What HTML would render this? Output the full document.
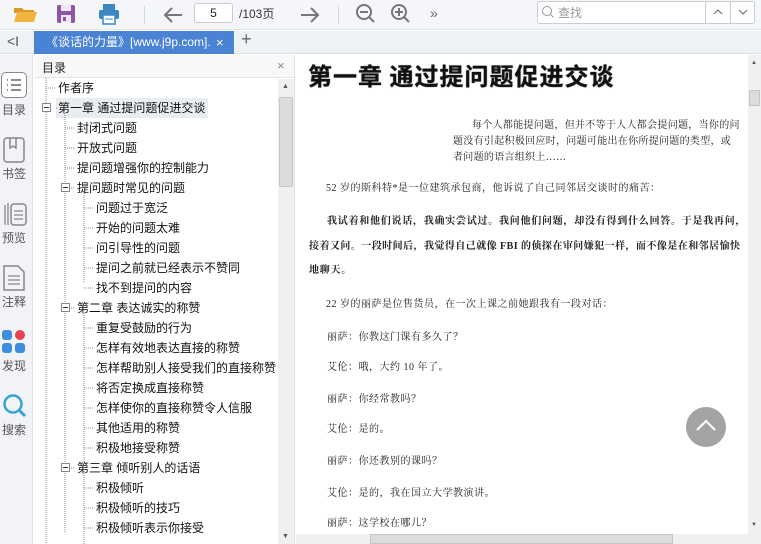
<!DOCTYPE html>
<html><head><meta charset="utf-8"><style>
*{margin:0;padding:0;box-sizing:border-box}
body{width:761px;height:544px;overflow:hidden;background:#fff;font-family:"Liberation Sans","Noto Sans CJK SC",sans-serif;position:relative;font-size:12px;color:#222}
.a{position:absolute}
.toc div{position:absolute;height:20px;line-height:20px;white-space:nowrap;font-size:12px;color:#111}
.c{font-family:"Liberation Serif","Noto Serif CJK SC",serif;font-size:10px;letter-spacing:.5px;color:#222;position:absolute;white-space:nowrap}
.side{position:absolute;left:0;width:28px;text-align:center;font-size:12px;color:#555}
</style></head><body>
<!-- toolbar -->
<div class="a" style="left:0;top:0;width:761px;height:30px;background:#f4f6f9;border-bottom:1px solid #e2e6eb"></div>
<svg class="a" style="left:12px;top:3px" width="26" height="22" viewBox="0 0 26 22"><path d="M2 5h8l2 2h10v3H2z" fill="#d99a2b"/><path d="M2 19L5 9h20l-3 10z" fill="#f2b440"/></svg>
<svg class="a" style="left:56px;top:4px" width="20" height="20" viewBox="0 0 20 20"><rect x="1" y="1" width="18" height="18" rx="2" fill="#8e55a8"/><rect x="5" y="1" width="10" height="6" fill="#f0e6f5"/><rect x="5" y="11" width="10" height="8" fill="#f0e6f5"/><rect x="7" y="13" width="3" height="4" fill="#8e55a8"/></svg>
<svg class="a" style="left:98px;top:3px" width="22" height="22" viewBox="0 0 22 22"><rect x="5" y="1" width="12" height="6" fill="#3b87c4"/><rect x="1" y="7" width="20" height="9" rx="2" fill="#3b87c4"/><rect x="5" y="12" width="12" height="9" fill="#fff" stroke="#3b87c4" stroke-width="1.5"/><line x1="7" y1="16" x2="15" y2="16" stroke="#3b87c4"/></svg>
<div class="a" style="left:144px;top:6px;width:1px;height:18px;background:#d5d9de"></div>
<svg class="a" style="left:162px;top:5px" width="22" height="20"><path d="M20 10H3M10 3L3 10l7 7" stroke="#777" stroke-width="2" fill="none"/></svg>
<div class="a" style="left:194px;top:3px;width:39px;height:20px;border:1px solid #c6ccd3;border-radius:3px;background:#fff;text-align:center;line-height:18px;font-size:12px">5</div>
<div class="a" style="left:239px;top:5px;font-size:12px;color:#333">/103页</div>
<svg class="a" style="left:299px;top:5px" width="22" height="20"><path d="M2 10h17M12 3l7 7-7 7" stroke="#777" stroke-width="2" fill="none"/></svg>
<div class="a" style="left:338px;top:6px;width:1px;height:18px;background:#d5d9de"></div>
<svg class="a" style="left:355px;top:3px" width="22" height="22"><circle cx="9" cy="9" r="7" stroke="#777" stroke-width="2" fill="none"/><path d="M5 9h8M14 14l5 5" stroke="#777" stroke-width="2"/></svg>
<svg class="a" style="left:390px;top:3px" width="22" height="22"><circle cx="9" cy="9" r="7" stroke="#777" stroke-width="2" fill="none"/><path d="M5 9h8M9 5v8M14 14l5 5" stroke="#777" stroke-width="2"/></svg>
<div class="a" style="left:430px;top:5px;font-size:14px;color:#666">»</div>
<div class="a" style="left:537px;top:1px;width:218px;height:23px;border:1px solid #c9ced5;border-radius:3px;background:#fff"></div>
<svg class="a" style="left:541px;top:5px" width="14" height="14"><circle cx="6" cy="6" r="4.5" stroke="#999" fill="none"/><path d="M9.5 9.5l3 3" stroke="#999"/></svg>
<div class="a" style="left:558px;top:4px;font-size:12px;color:#999">查找</div>
<div class="a" style="left:705px;top:1px;width:1px;height:23px;background:#c9ced5"></div>
<div class="a" style="left:730px;top:1px;width:1px;height:23px;background:#c9ced5"></div>
<svg class="a" style="left:713px;top:9px" width="10" height="6"><path d="M1 5l4-4 4 4" stroke="#666" fill="none"/></svg>
<svg class="a" style="left:738px;top:9px" width="10" height="6"><path d="M1 1l4 4 4-4" stroke="#666" fill="none"/></svg>
<!-- tab bar -->
<div class="a" style="left:0;top:31px;width:761px;height:23px;background:#eef1f5;border-bottom:1px solid #dde1e6"></div>
<div class="a" style="left:7px;top:33px;font-size:14px;color:#555">&lt;I</div>
<div class="a" style="left:34px;top:31px;width:200px;height:23px;background:#4a82d4;color:#fff;font-size:12px;line-height:23px;padding-left:12px;white-space:nowrap;overflow:hidden">《谈话的力量》[www.j9p.com].</div>
<div class="a" style="left:216px;top:31px;color:#fff;font-size:13px;line-height:23px">×</div>
<div class="a" style="left:241px;top:29px;color:#666;font-size:18px">+</div>
<!-- sidebar -->
<div class="a" style="left:0;top:55px;width:33px;height:489px;background:#f1f3f6;border-right:1px solid #dde1e6"></div>
<div class="a" style="left:1px;top:72px;width:26px;height:26px;border:1.5px solid #888;border-radius:5px;background:#fff"></div>
<svg class="a" style="left:6px;top:78px" width="16" height="14"><g stroke="#666" stroke-width="1.5"><path d="M1 2h1M5 2h10M1 7h1M5 7h10M1 12h1M5 12h10"/></g></svg>
<div class="side" style="top:101px">目录</div>
<svg class="a" style="left:3px;top:137px" width="22" height="26"><rect x="1" y="1" width="20" height="24" rx="3" stroke="#888" stroke-width="1.5" fill="none"/><path d="M7 1v10l3-2 3 2V1" stroke="#888" stroke-width="1.5" fill="none"/></svg>
<div class="side" style="top:165px">书签</div>
<svg class="a" style="left:3px;top:201px" width="24" height="26"><path d="M2 4v20M5 2v22" stroke="#888" stroke-width="1.3"/><rect x="8" y="3" width="15" height="21" rx="3" stroke="#888" stroke-width="1.5" fill="none"/><path d="M11 10h9M11 14h9M11 18h9" stroke="#888" stroke-width="1.3"/></svg>
<div class="side" style="top:229px">预览</div>
<svg class="a" style="left:3px;top:265px" width="22" height="26"><path d="M1 1h14l6 6v18H1z" stroke="#888" stroke-width="1.5" fill="none"/><path d="M5 11h12M5 15h12M5 19h12" stroke="#888" stroke-width="1.3"/></svg>
<div class="side" style="top:293px">注释</div>
<div class="a" style="left:2px;top:330px;width:10px;height:10px;border-radius:3px;background:#3d8ee0"></div>
<div class="a" style="left:15px;top:330px;width:10px;height:10px;border-radius:50%;background:#e8434a"></div>
<div class="a" style="left:2px;top:343px;width:10px;height:10px;border-radius:3px;background:#3d8ee0"></div>
<div class="a" style="left:15px;top:343px;width:10px;height:10px;border-radius:3px;background:#3d8ee0"></div>
<div class="side" style="top:357px">发现</div>
<svg class="a" style="left:2px;top:393px" width="26" height="26"><circle cx="11" cy="11" r="8.5" stroke="#3aa0d8" stroke-width="2.5" fill="none"/><path d="M17 17l6 6" stroke="#3aa0d8" stroke-width="3"/></svg>
<div class="side" style="top:421px">搜索</div>
<!-- toc panel -->
<div class="a" style="left:34px;top:55px;width:261px;height:489px;background:#fff;border-right:1px solid #dde1e6"></div>
<div class="a" style="left:34px;top:55px;width:260px;height:23px;background:#f7f8fa;border-bottom:1px solid #e2e5e9"></div>
<div class="a" style="left:42px;top:59px;font-size:12px">目录</div>
<div class="a" style="left:277px;top:58px;font-size:13px;color:#888">×</div>
<div class="a" style="left:56px;top:98px;width:152px;height:20px;background:#e9ecf0"></div>
<div class="toc">
<div style="left:58px;top:78px">作者序</div>
<div style="left:58px;top:98px">第一章 通过提问题促进交谈</div>
<div style="left:77px;top:118px">封闭式问题</div>
<div style="left:77px;top:138px">开放式问题</div>
<div style="left:77px;top:158px">提问题增强你的控制能力</div>
<div style="left:77px;top:178px">提问题时常见的问题</div>
<div style="left:96px;top:198px">问题过于宽泛</div>
<div style="left:96px;top:218px">开始的问题太难</div>
<div style="left:96px;top:238px">问引导性的问题</div>
<div style="left:96px;top:258px">提问之前就已经表示不赞同</div>
<div style="left:96px;top:278px">找不到提问的内容</div>
<div style="left:77px;top:298px">第二章 表达诚实的称赞</div>
<div style="left:96px;top:318px">重复受鼓励的行为</div>
<div style="left:96px;top:338px">怎样有效地表达直接的称赞</div>
<div style="left:96px;top:358px">怎样帮助别人接受我们的直接称赞</div>
<div style="left:96px;top:378px">将否定换成直接称赞</div>
<div style="left:96px;top:398px">怎样使你的直接称赞令人信服</div>
<div style="left:96px;top:418px">其他适用的称赞</div>
<div style="left:96px;top:438px">积极地接受称赞</div>
<div style="left:77px;top:458px">第三章 倾听别人的话语</div>
<div style="left:96px;top:478px">积极倾听</div>
<div style="left:96px;top:498px">积极倾听的技巧</div>
<div style="left:96px;top:518px">积极倾听表示你接受</div>
</div>
<svg class="a" style="left:34px;top:78px" width="244" height="466"><g stroke="#888" stroke-dasharray="1 1" fill="none">
<path d="M12 0v466M12 10h10M22 30h2"/>
<path d="M31 35v420M31 50h10M31 70h10M31 90h10M31 110h10"/>
<path d="M50 115v90M50 130h10M50 150h10M50 170h10M50 190h10M50 210h10"/>
<path d="M31 230h10M50 235v170M50 250h10M50 270h10M50 290h10M50 310h10M50 330h10M50 350h10M50 370h10"/>
<path d="M31 390h10M50 395v71M50 410h10M50 430h10M50 450h10"/>
</g>
<g fill="#fff" stroke="#888"><rect x="8.5" y="25.5" width="8" height="8"/><rect x="27.5" y="105.5" width="8" height="8"/><rect x="27.5" y="225.5" width="8" height="8"/><rect x="27.5" y="385.5" width="8" height="8"/></g>
<g stroke="#333"><path d="M10 29.5h5M29 109.5h5M29 229.5h5M29 389.5h5"/></g></svg>
<div class="a" style="left:278px;top:79px;width:16px;height:465px;background:#f0f0f0"></div>
<div class="a" style="left:279px;top:97px;width:14px;height:90px;background:#dcdcdc;border:1px solid #c5c5c5;border-radius:2px"></div>
<div class="a" style="left:282px;top:83px;font-size:7px;color:#555">▲</div>
<div class="a" style="left:282px;top:533px;font-size:7px;color:#555">▼</div>
<!-- content -->
<div class="a" style="left:308px;top:60px;font-size:24px;font-weight:bold;color:#111;letter-spacing:1px;white-space:nowrap;font-family:'Noto Sans CJK SC',sans-serif;text-shadow:0 0 1px #000;line-height:30px">第一章 通过提问题促进交谈</div>
<div class="c" style="left:472px;top:116px;letter-spacing:.3px">每个人都能提问题，但并不等于人人都会提问题，当你的问</div>
<div class="c" style="left:453px;top:132px;letter-spacing:.3px">题没有引起积极回应时，问题可能出在你所提问题的类型，或</div>
<div class="c" style="left:453px;top:148px;letter-spacing:.3px">者问题的语言组织上……</div>
<div class="c" style="left:326px;top:179px">52 岁的斯科特*是一位建筑承包商，他诉说了自己同邻居交谈时的痛苦：</div>
<div class="c" style="left:327px;top:212px;font-weight:bold;letter-spacing:.75px">我试着和他们说话，我确实尝试过。我问他们问题，却没有得到什么回答。于是我再问，</div>
<div class="c" style="left:309px;top:237px;font-weight:bold;letter-spacing:.45px">接着又问。一段时间后，我觉得自己就像 FBI 的侦探在审问嫌犯一样，而不像是在和邻居愉快</div>
<div class="c" style="left:309px;top:261px;font-weight:bold;letter-spacing:.75px">地聊天。</div>
<div class="c" style="left:326px;top:295px">22 岁的丽萨是位售货员，在一次上课之前她跟我有一段对话：</div>
<div class="c" style="left:327px;top:328px">丽萨：你教这门课有多久了？</div>
<div class="c" style="left:327px;top:358px">艾伦：哦，大约 10 年了。</div>
<div class="c" style="left:327px;top:390px">丽萨：你经常教吗？</div>
<div class="c" style="left:327px;top:420px">艾伦：是的。</div>
<div class="c" style="left:327px;top:452px">丽萨：你还教别的课吗？</div>
<div class="c" style="left:327px;top:484px">艾伦：是的，我在国立大学教演讲。</div>
<div class="c" style="left:327px;top:514px">丽萨：这学校在哪儿？</div>
<div class="a" style="left:686px;top:407px;width:40px;height:40px;border-radius:50%;background:#a3a3a3"></div>
<svg class="a" style="left:694px;top:417px" width="24" height="16"><path d="M3 13l9-9 9 9" stroke="#fff" stroke-width="2.2" fill="none"/></svg>
<!-- scrollbars -->
<div class="a" style="left:748px;top:55px;width:13px;height:480px;background:#f0f0f0"></div>
<div class="a" style="left:749px;top:90px;width:11px;height:16px;background:#dcdcdc;border:1px solid #c5c5c5"></div>
<div class="a" style="left:751px;top:60px;font-size:6px;color:#555">▲</div>
<div class="a" style="left:751px;top:522px;font-size:6px;color:#555">▼</div>
<div class="a" style="left:296px;top:534px;width:465px;height:10px;background:#f0f0f0"></div>
<div class="a" style="left:370px;top:534px;width:303px;height:10px;background:#dcdcdc;border:1px solid #c5c5c5"></div>
</body></html>
